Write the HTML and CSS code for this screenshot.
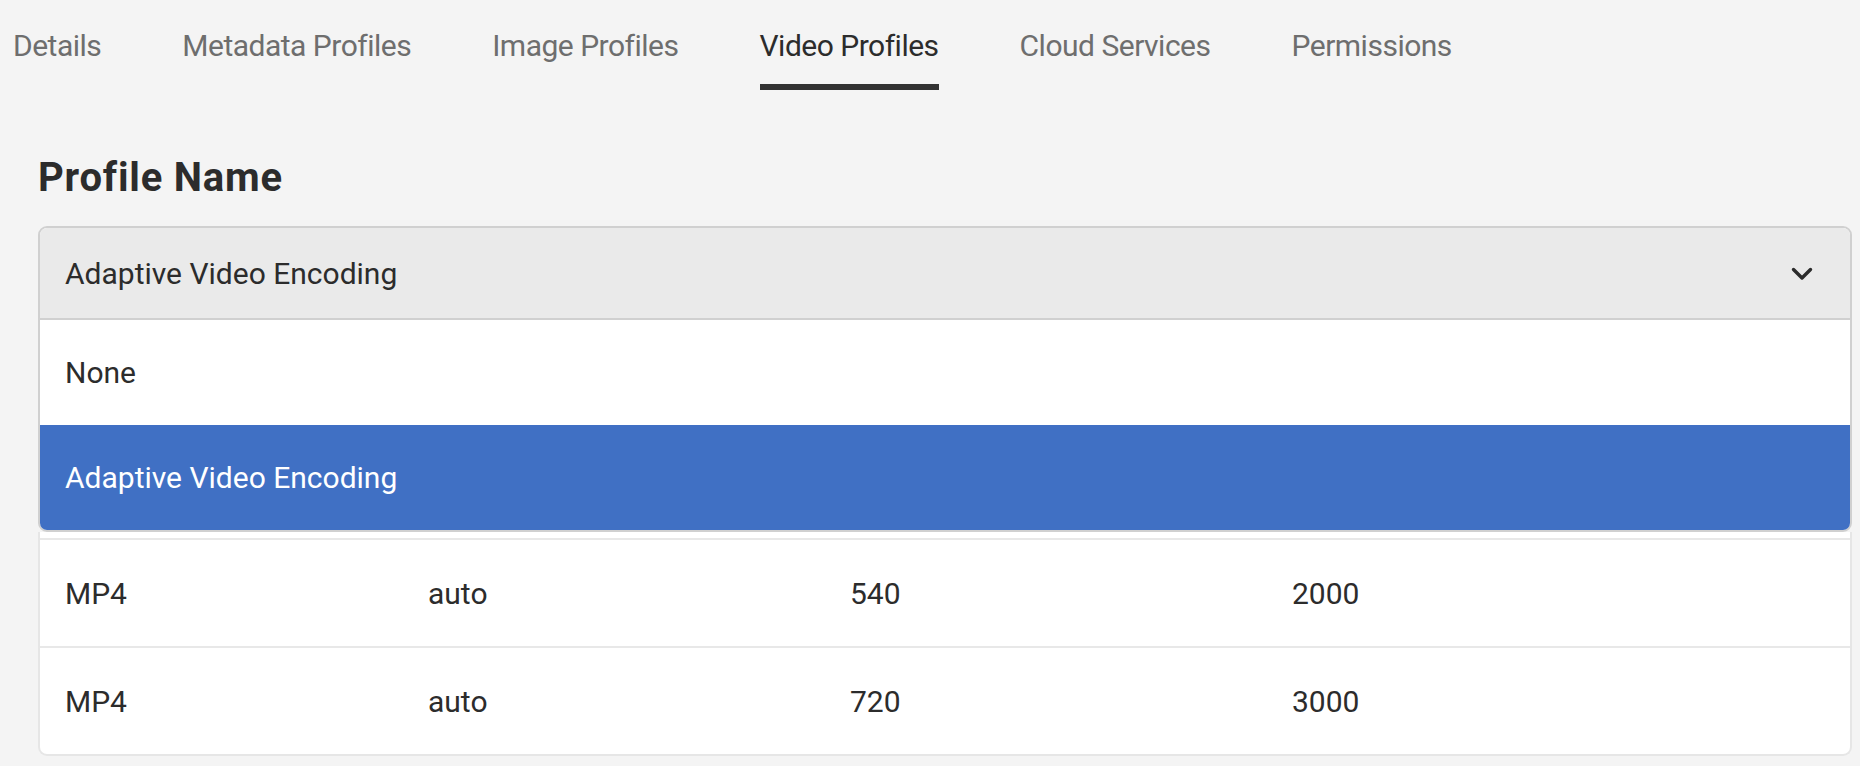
FILE: index.html
```html
<!DOCTYPE html>
<html lang="en">
<head>
<meta charset="utf-8">
<title>Video Profiles</title>
<link rel="stylesheet" href="styles.css">
</head>
<body>
  <nav class="tabs">
    <a class="tab">Details</a>
    <a class="tab">Metadata Profiles</a>
    <a class="tab">Image Profiles</a>
    <a class="tab tab-active">Video Profiles</a>
    <a class="tab">Cloud Services</a>
    <a class="tab">Permissions</a>
  </nav>
  <main class="content">
    <h2 class="title">Profile Name</h2>
    <div class="select">
      <div class="select-head">
        <span class="select-value">Adaptive Video Encoding</span>
        <svg class="chevron" width="22" height="14" viewBox="0 0 22 14" aria-hidden="true">
          <path d="M2.5 2.5 L11 11 L19.5 2.5" fill="none" stroke="#2c2c2c" stroke-width="3.4" stroke-linecap="round" stroke-linejoin="round"/>
        </svg>
      </div>
      <ul class="menu">
        <li class="option">None</li>
        <li class="option option-selected">Adaptive Video Encoding</li>
      </ul>
    </div>
    <div class="card">
      <div class="row">
        <span>MP4</span><span>auto</span><span>540</span><span>2000</span>
      </div>
      <div class="row">
        <span>MP4</span><span>auto</span><span>720</span><span>3000</span>
      </div>
    </div>
  </main>
</body>
</html>
```

FILE: styles.css
```css
html, body {
  margin: 0;
  padding: 0;
  background: #f4f4f4;
  font-family: Roboto, "Liberation Sans", sans-serif;
  color: #2c2c2c;
}

.tabs {
  display: flex;
  gap: 81px;
  padding-left: 13px;
  height: 90px;
}

.tab {
  display: block;
  padding-top: 28px;
  padding-bottom: 20px;
  border-bottom: 6px solid transparent;
  font-size: 30px;
  line-height: 36px;
  letter-spacing: -0.5px;
  color: #6e6e6e;
}

.tab-active {
  color: #2c2c2c;
  border-bottom-color: #323232;
}

.content {
  padding: 0 8px 0 38px;
}

.title {
  margin: 64px 0 24px;
  font-size: 40px;
  line-height: 48px;
  font-weight: 700;
  letter-spacing: 0.8px;
  color: #2c2c2c;
}

.select {
  border: 2px solid #d0d0d0;
  border-radius: 9px;
  overflow: hidden;
  background: #ffffff;
}

.select-head {
  display: flex;
  align-items: center;
  justify-content: space-between;
  padding: 28px 37px 26px 25px;
  background: #eaeaea;
  border-bottom: 2px solid #d0d0d0;
  font-size: 30px;
  line-height: 36px;
}

.chevron {
  display: block;
}

.menu {
  list-style: none;
  margin: 0;
  padding: 0;
}

.option {
  padding: 35px 25px 34px;
  font-size: 30px;
  line-height: 36px;
  color: #2c2c2c;
}

.option-selected {
  background: #4070c4;
  color: #ffffff;
}

.card {
  background: #ffffff;
  border: 2px solid #e6e6e6;
  border-top: none;
  border-radius: 0 0 9px 9px;
  padding-top: 6px;
}

.row {
  display: grid;
  grid-template-columns: 363px 422px 442px 1fr;
  padding: 36px 25px 34px;
  border-top: 2px solid #e8e8e8;
  font-size: 30px;
  line-height: 36px;
  color: #2c2c2c;
}
```
